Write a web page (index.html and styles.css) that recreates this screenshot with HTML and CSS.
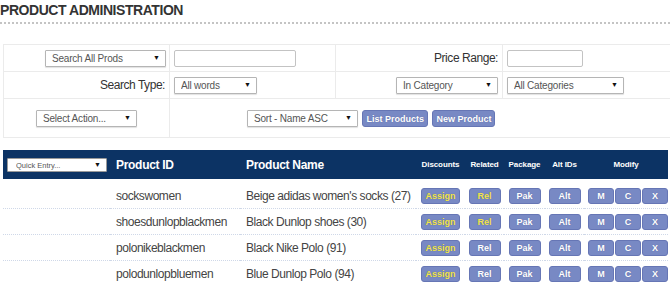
FILE: index.html
```html
<!DOCTYPE html>
<html lang="en">
<head>
    <meta charset="UTF-8">
    <meta name="viewport" content="width=device-width, initial-scale=1.0">
    <title>Product Administration</title>
    <link rel="stylesheet" href="styles.css">
</head>
<body>

<h1 class="page-title">PRODUCT ADMINISTRATION</h1>

<table class="search-table">
    <colgroup>
        <col class="sc1">
        <col class="sc2">
        <col class="sc3">
        <col class="sc4">
    </colgroup>
    <tr>
        <td class="right">
            <span class="select w-prods"><select><option>Search All Prods</option></select></span>
        </td>
        <td><input type="text" class="text-input w-search"></td>
        <td class="right label">Price Range:</td>
        <td><input type="text" class="text-input w-price"></td>
    </tr>
    <tr>
        <td class="right label">Search Type:</td>
        <td><span class="select w-words"><select><option>All words</option></select></span></td>
        <td class="right"><span class="select w-incat"><select><option>In Category</option></select></span></td>
        <td><span class="select w-allcat"><select><option>All Categories</option></select></span></td>
    </tr>
    <tr class="action-row">
        <td class="center"><span class="select w-action"><select><option>Select Action...</option></select></span></td>
        <td colspan="3" class="sort-cell">
            <span class="select w-sort"><select><option>Sort - Name ASC</option></select></span>
            <button class="btn">List Products</button>
            <button class="btn">New Product</button>
        </td>
    </tr>
</table>

<table class="product-table">
    <colgroup>
        <col class="pc0">
        <col class="pc1">
        <col class="pc2">
        <col class="pc3">
        <col class="pc4">
        <col class="pc5">
        <col class="pc6">
        <col class="pc7">
    </colgroup>
    <thead>
        <tr>
            <th class="quick"><span class="select small w-quick"><select><option>Quick Entry...</option></select></span></th>
            <th class="big">Product ID</th>
            <th class="big">Product Name</th>
            <th class="small-head">Discounts</th>
            <th class="small-head">Related</th>
            <th class="small-head">Package</th>
            <th class="small-head">Alt IDs</th>
            <th class="small-head">Modify</th>
        </tr>
    </thead>
    <tbody id="productList">
    </tbody>
</table>

<script>
    const products = [
        { id: "sockswomen", name: "Beige adidas women's socks (27)", related: true },
        { id: "shoesdunlopblackmen", name: "Black Dunlop shoes (30)", related: true },
        { id: "polonikeblackmen", name: "Black Nike Polo (91)", related: false },
        { id: "polodunlopbluemen", name: "Blue Dunlop Polo (94)", related: false }
    ];

    function loadProducts() {
        const list = document.getElementById("productList");
        list.innerHTML = '';
        for (let i = 0; i < products.length; i++) {
            const p = products[i];
            const row = document.createElement("tr");
            row.innerHTML = `
                <td></td>
                <td>${p.id}</td>
                <td>${p.name}</td>
                <td class="center"><button class="btn btn-row btn-assign hl">Assign</button></td>
                <td class="center"><button class="btn btn-row btn-rel ${p.related ? 'hl' : ''}">Rel</button></td>
                <td class="center"><button class="btn btn-row btn-pak">Pak</button></td>
                <td class="center"><button class="btn btn-row btn-alt">Alt</button></td>
                <td class="modify"><button class="btn btn-row btn-sq">M</button><button class="btn btn-row btn-sq">C</button><button class="btn btn-row btn-sq">X</button></td>
            `;
            list.appendChild(row);
        }
    }

    loadProducts();
</script>

</body>
</html>
```

FILE: styles.css
```css
body {
    font-family: "Liberation Sans", Arial, sans-serif;
    margin: 0;
    color: #333;
}

.page-title {
    font-size: 14px;
    letter-spacing: -0.45px;
    line-height: 18px;
    margin: 0;
    padding-top: 1px;
    padding-bottom: 3px;
    color: #333;
    border-bottom: 2px dotted #c4c4c4;
}

/* search box */
.search-table {
    border-collapse: collapse;
    margin: 20px 0 0 3px;
    width: 667px;
    table-layout: fixed;
}

.search-table tr {
    height: 27px;
}

.search-table tr.action-row {
    height: 39px;
}

.search-table td {
    border: 1px solid #ebebeb;
    padding: 0 4px;
    vertical-align: middle;
}

.sc1 { width: 166px; }
.sc2 { width: 166px; }
.sc3 { width: 167px; }
.sc4 { width: 168px; }

.right { text-align: right; }
.center { text-align: center; }

.label {
    font-size: 12px;
    letter-spacing: -0.45px;
}

.sort-cell {
    padding-left: 77px !important;
}

.select {
    position: relative;
    display: inline-block;
    vertical-align: middle;
    text-align: left;
}

.select select {
    -webkit-appearance: none;
    appearance: none;
    width: 100%;
    height: 17px;
    border: 1px solid #b5b5b5;
    border-radius: 1px;
    background: #fff;
    box-shadow: 0 1px 1px rgba(0, 0, 0, 0.12);
    font-family: "Liberation Sans", Arial, sans-serif;
    font-size: 10px;
    letter-spacing: -0.2px;
    color: #555;
    padding: 0 0 0 6px;
    margin: 0;
    display: block;
}

.select::after {
    content: "\25BC";
    position: absolute;
    right: 6px;
    top: 4px;
    font-size: 7px;
    color: #111;
    pointer-events: none;
}

.text-input {
    height: 15px;
    border: 1px solid #c3c3c3;
    border-radius: 2px;
    padding: 0;
    margin: 0;
    vertical-align: middle;
    box-sizing: content-box;
}

.w-prods { width: 121px; margin-right: -1px; }
.w-search { width: 120px; }
.w-price { width: 74px; }
.w-words { width: 83px; }
.w-incat { width: 102px; }
.w-allcat { width: 117px; }
.w-action { width: 101px; }
.w-sort { width: 111px; }
.w-quick { width: 100px; }

.btn {
    background-color: #7889c4;
    color: white;
    border: 1px solid #6676b5;
    border-radius: 3px;
    font-family: "Liberation Sans", Arial, sans-serif;
    font-weight: bold;
    font-size: 9px;
    height: 17px;
    padding: 0 3px;
    margin: 0;
    vertical-align: middle;
    cursor: pointer;
    text-shadow: 0 0 1px rgba(40, 50, 100, 0.4);
}

.btn:hover {
    background-color: #6778b5;
}

/* product list */
.product-table {
    border-collapse: collapse;
    margin: 12px 0 0 3px;
    width: 665px;
    table-layout: fixed;
}

.pc0 { width: 107px; }
.pc1 { width: 130px; }
.pc2 { width: 176px; }
.pc3 { width: 49px; }
.pc4 { width: 39px; }
.pc5 { width: 41px; }
.pc6 { width: 39px; }
.pc7 { width: 84px; }

.product-table thead tr {
    height: 29px;
}

.product-table th {
    background-color: #0c3364;
    color: white;
    padding: 0;
    text-align: left;
    vertical-align: middle;
}

.product-table th.quick {
    padding-left: 4px;
}

.select.small select {
    height: 14px;
    font-size: 7.5px;
    letter-spacing: 0;
    padding-left: 8px;
    box-shadow: none;
    border-color: #999;
}

.select.small::after {
    top: 3px;
    font-size: 7px;
}

.product-table th.big {
    font-size: 12px;
    letter-spacing: -0.3px;
    padding-left: 6px;
}

.product-table th.small-head {
    font-size: 8px;
    letter-spacing: -0.1px;
    text-align: center;
}

.product-table tbody tr {
    height: 26px;
}

.product-table tbody tr:first-child {
    height: 29px;
}

.product-table td {
    padding: 2px 0 0 6px;
    font-size: 12px;
    letter-spacing: -0.45px;
    color: #444;
    border-bottom: 1px dotted #cfd8e8;
    vertical-align: middle;
    white-space: nowrap;
}

.product-table tbody tr:first-child td {
    padding-top: 6px;
}

.product-table td.center {
    padding: 2px 0 0 0;
}

.product-table td.modify {
    padding: 2px 0 0 4px;
}

.product-table tbody tr:first-child td.center,
.product-table tbody tr:first-child td.modify {
    padding-top: 5px;
}

.btn-row {
    height: 16px;
    letter-spacing: 0;
}

.btn-assign { width: 39px; padding: 0; }
.btn-rel { width: 32px; padding: 0; }
.btn-pak { width: 32px; padding: 0; }
.btn-alt { width: 32px; padding: 0; }
.btn-sq { width: 26px; padding: 0; margin-right: 1px; }

.hl {
    color: #f3e54a;
}
```
